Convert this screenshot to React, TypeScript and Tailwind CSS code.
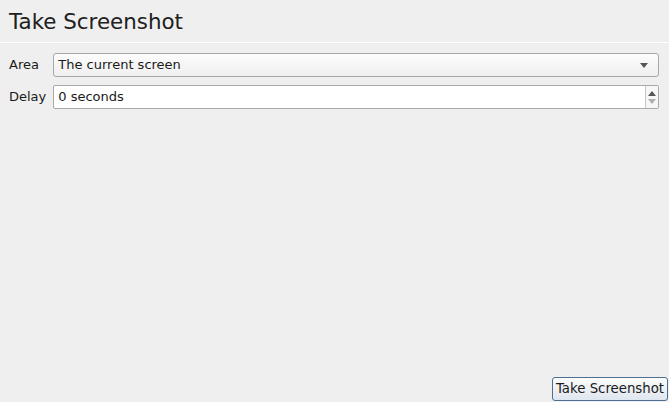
import React from 'react';

const font = { fontFamily: '"DejaVu Sans", Verdana, sans-serif' };

export default function App() {
  return (
    <div
      className="flex h-[402px] w-[669px] flex-col bg-[#efefef] text-[13px] text-[#1a1a1a]"
      style={font}
    >
      {/* Header */}
      <div className="flex h-[43px] items-center border-b border-white pl-[9px] pt-[1px]">
        <h1 className="text-[21.4px] leading-none text-[#202020]">Take Screenshot</h1>
      </div>

      {/* Form */}
      <div className="grid grid-cols-[auto_1fr] items-center gap-x-[7px] gap-y-[8px] pl-[9px] pr-[10px] pt-[10px]">
        <label>Area</label>
        <div className="flex h-[24px] items-center justify-between rounded-[3px] border border-[#a8a8a8] bg-gradient-to-b from-[#fcfcfc] to-[#efefef] pl-[4px] pr-[10px]">
          <span>The current screen</span>
          <svg width="8" height="5" viewBox="0 0 8 5">
            <path d="M0 0h8L4 5z" fill="#555" />
          </svg>
        </div>

        <label>Delay</label>
        <div className="flex h-[24px] items-stretch overflow-hidden rounded-[2px] border border-[#a8a8a8] bg-white">
          <span className="flex flex-1 items-center pl-[4px]">0 seconds</span>
          <div className="flex w-[13px] flex-col items-center justify-center gap-[3px] border-l border-[#c8c8c8] bg-[#f6f6f6]">
            <svg width="8" height="5" viewBox="0 0 8 5">
              <path d="M0 5h8L4 0z" fill="#555" />
            </svg>
            <svg width="8" height="5" viewBox="0 0 8 5">
              <path d="M0 0h8L4 5z" fill="#b0b0b0" />
            </svg>
          </div>
        </div>
      </div>

      <div className="flex-1" />

      {/* Footer */}
      <div className="flex justify-end pb-[1px] pr-[1px]">
        <button className="h-[24px] w-[116px] rounded-[3px] border border-[#4d6f91] bg-gradient-to-b from-[#fbfcfd] to-[#dfe6ee] text-[13.3px] text-[#1a1a1a]">
          Take Screenshot
        </button>
      </div>
    </div>
  );
}
